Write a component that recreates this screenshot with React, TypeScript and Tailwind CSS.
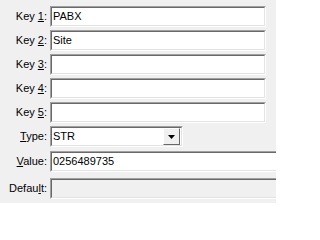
import React from "react";

const FONT = "font-['Liberation_Sans',Arial,sans-serif]";

// Classic Win32 sunken edit border
function Sunken({
  className = "",
  bg = "bg-white",
  children,
}: {
  className?: string;
  bg?: string;
  children?: React.ReactNode;
}) {
  return (
    <div
      className={`h-[21px] shrink-0 border border-t-[#a0a0a0] border-l-[#a0a0a0] border-b-white border-r-white ${className}`}
    >
      <div
        className={`h-full border border-t-[#696969] border-l-[#696969] border-b-[#e3e3e3] border-r-[#e3e3e3] ${bg} flex items-center px-[1px] overflow-hidden whitespace-nowrap`}
      >
        {children}
      </div>
    </div>
  );
}

function Label({ children }: { children: React.ReactNode }) {
  return <div className="w-[48px] shrink-0 text-right pr-[1px] leading-none">{children}</div>;
}

function Row({ label, className = "", children }: { label: React.ReactNode; className?: string; children: React.ReactNode }) {
  return (
    <div className={`flex items-center gap-[2px] ${className}`}>
      <Label>{label}</Label>
      {children}
    </div>
  );
}

export default function App() {
  const keys = [
    { n: "1", v: "PABX" },
    { n: "2", v: "Site" },
    { n: "3", v: "" },
    { n: "4", v: "" },
    { n: "5", v: "" },
  ];

  return (
    <div className={`w-[276px] h-[203px] bg-[#f0f0f0] overflow-hidden text-[11px] text-black ${FONT}`}>
      <div className="pt-[6px] flex flex-col gap-[3px]">
        {keys.map((k) => (
          <Row
            key={k.n}
            label={
              <>
                Key <u>{k.n}</u>:
              </>
            }
          >
            <Sunken className="w-[216px]">{k.v}</Sunken>
          </Row>
        ))}

        {/* Type combo */}
        <Row
          label={
            <>
              <u>T</u>ype:
            </>
          }
        >
          <Sunken className="w-[133px]">
            <span className="flex-1">STR</span>
            <div className="h-[17px] w-[17px] shrink-0 border border-t-white border-l-white border-b-[#696969] border-r-[#696969] bg-[#f0f0f0] flex items-center justify-center">
              <svg width="7" height="4" viewBox="0 0 7 4">
                <polygon points="0,0 7,0 3.5,4" fill="#000" />
              </svg>
            </div>
          </Sunken>
        </Row>

        <Row
          className="mt-[1px]"
          label={
            <>
              <u>V</u>alue:
            </>
          }
        >
          <Sunken className="w-[240px]">0256489735</Sunken>
        </Row>

        <Row
          className="mt-[3px]"
          label={
            <>
              Defau<u>l</u>t:
            </>
          }
        >
          <Sunken className="w-[240px]" bg="bg-[#f0f0f0]" />
        </Row>
      </div>
    </div>
  );
}
